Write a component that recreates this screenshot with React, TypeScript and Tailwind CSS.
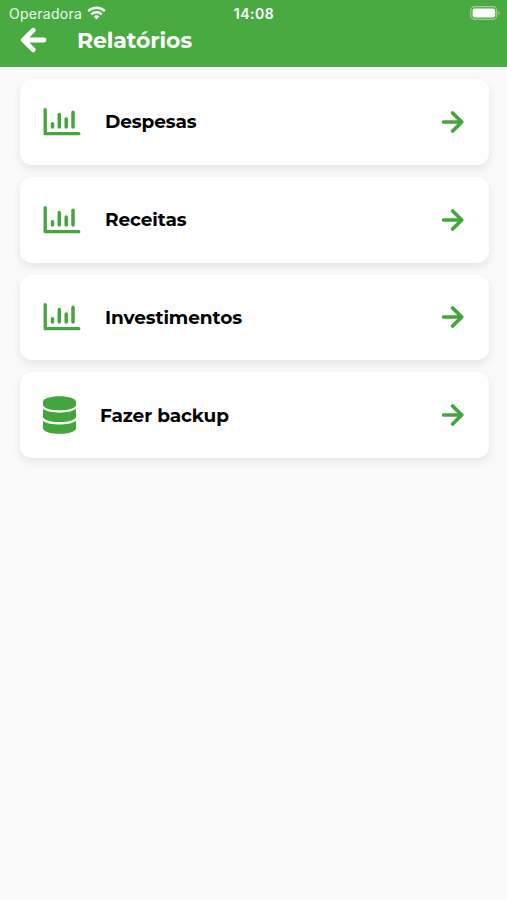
import { JSX } from "react";
import { FaDatabase } from "react-icons/fa";

interface Report {
  label: string;
  icon: JSX.Element;
}

const ChartIcon = () => (
  <svg width="38" height="30" viewBox="0 0 38 30" fill="none" stroke="currentColor" strokeLinecap="round" strokeLinejoin="round">
    <path d="M2.2 2.6v24.1h33.6" strokeWidth="3.3" />
    <path d="M9.5 16.8v3.2M16.3 7.4V20M23.2 12V20M30 5.2V20" strokeWidth="3.5" />
  </svg>
);

const ArrowIcon = () => (
  <svg width="24" height="24" viewBox="0 0 24 24" fill="none" stroke="currentColor" strokeWidth="3.7" strokeLinecap="round" strokeLinejoin="round">
    <path d="M2.6 12h18M11.6 3l9.2 9-9.2 9" />
  </svg>
);

const BackIcon = () => (
  <svg width="28" height="26" viewBox="0 0 28 26" fill="none" stroke="currentColor" strokeWidth="4.8" strokeLinecap="round" strokeLinejoin="round">
    <path d="M24 13H4M13.2 3.3L3.4 13l9.8 9.7" />
  </svg>
);

const WifiIcon = () => (
  <svg width="19" height="14" viewBox="0 0 19 14" fill="none" stroke="currentColor" strokeWidth="2.3">
    <path d="M1.2 5.1a12 12 0 0 1 16.6 0M4.2 8.4a7.6 7.6 0 0 1 10.6 0" />
    <path d="M9.5 13.6L6.6 10.6a4.1 4.1 0 0 1 5.8 0z" fill="currentColor" stroke="none" />
  </svg>
);

const BatteryIcon = () => (
  <svg width="31" height="14" viewBox="0 0 31 14" fill="none">
    <rect x=".7" y=".7" width="26" height="12.6" rx="3.8" stroke="white" strokeOpacity=".45" strokeWidth="1.2" />
    <rect x="2.6" y="2.5" width="22.6" height="9" rx="2.2" fill="white" />
    <path d="M28.5 4.8v4.4c1.7-.8 1.7-3.6 0-4.4z" fill="white" fillOpacity=".5" />
  </svg>
);

const reports: Report[] = [
  { label: "Despesas", icon: <ChartIcon /> },
  { label: "Receitas", icon: <ChartIcon /> },
  { label: "Investimentos", icon: <ChartIcon /> },
  { label: "Fazer backup", icon: <FaDatabase className="h-[38px] w-[33px]" /> },
];

const StatusBar = () => (
  <div className="grid grid-cols-3 items-center h-7 pb-0.5 pl-[9px] pr-[6px] font-['Inter',sans-serif]">
    <div className="flex items-center gap-[5px] text-[14px] tracking-[0.28px] text-white/90">
      Operadora
      <span className="text-white"><WifiIcon /></span>
    </div>
    <div className="-ml-0.5 text-center text-[14px] font-semibold tracking-[0.5px]">14:08</div>
    <div className="flex justify-end"><BatteryIcon /></div>
  </div>
);

const ReportCard = ({ label, icon }: Report) => (
  <button className="flex items-center w-full h-[85.8px] pl-[23px] pr-6 rounded-xl bg-white text-[#42a63d] shadow-[0_4px_8px_rgba(0,0,0,0.09)]">
    {icon}
    <span className="ml-6 pt-px text-[18.5px] leading-6 font-bold tracking-[-0.1px] text-black">{label}</span>
    <span className="ml-auto"><ArrowIcon /></span>
  </button>
);

export default function App() {
  return (
    <div className="min-h-screen bg-[#fafafa] font-['Montserrat','Inter',sans-serif]">
      <header className="h-[67px] bg-[#4aaa42] text-white">
        <StatusBar />
        <div className="flex items-center h-6 pl-5">
          <BackIcon />
          <h1 className="ml-[29px] pt-0.5 text-[22px] leading-6 font-bold tracking-[-0.1px]">Relatórios</h1>
        </div>
      </header>
      <main className="flex flex-col gap-3 pt-3 pl-5 pr-[18.5px]">
        {reports.map(report => (
          <ReportCard key={report.label} {...report} />
        ))}
      </main>
    </div>
  );
}
